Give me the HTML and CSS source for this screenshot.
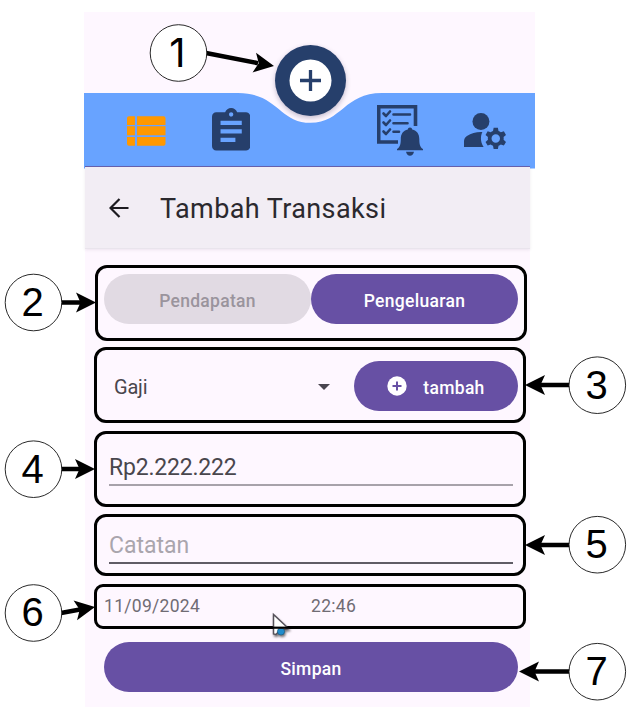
FILE: index.html
```html
<!DOCTYPE html>
<html lang="id">
<head>
<meta charset="utf-8">
<title>Tambah Transaksi</title>
<link rel="stylesheet" href="styles.css">
</head>
<body>
<main class="app">
  <nav class="nav">
    <svg class="nav-shape" viewBox="0 0 451 76" preserveAspectRatio="none"><path d="M0 0H154C194 0 195 30 226.500 30C258 30 260 0 298 0H451V76H0Z"/></svg>
    <div class="nav-items">
      <svg class="ic-list" viewBox="0 0 39 30"><path d="M2 0H8V8.800H0V2Q0 0 2 0ZM10.200 0H37Q39 0 39 2V8.800H10.200ZM0 10.300H8V19.400H0ZM10.200 10.300H39V19.400H10.200ZM0 21H8V30H2Q0 30 0 28ZM10.200 21H39V28Q39 30 37 30H10.200Z"/></svg>
      <svg class="ic-clip" viewBox="3 1 18 20"><path d="M19 3h-4.180C14.400 1.840 13.300 1 12 1s-2.400.84-2.820 2H5c-1.100 0-2 .9-2 2v14c0 1.100.9 2 2 2h14c1.100 0 2-.9 2-2V5c0-1.100-.9-2-2-2zm-7 0c.55 0 1 .45 1 1s-.45 1-1 1-1-.45-1-1 .45-1 1-1zm2 14H7v-2h7v2zm3-4H7v-2h10v2zm0-4H7V7h10v2z"/></svg>
      <svg class="ic-check" viewBox="0 0 46 51">
        <path class="line frame" d="M38.500 21V1.700H1.700V37H21"/>
        <path class="line" d="M6.500 8.500L9 11L13 6.500M6.500 17.500L9 20L13 15.500M6.500 26.500L9 29L13 24.500M16.500 9.500H33M16.500 18.200H30.500M16.500 26.800H22"/>
        <path d="M33 22.500C34.400 22.500 35 23.400 35.200 24.500C40 25.800 42.300 29 42.300 34C42.300 40 43.500 42.500 46 44V45.300H20V44C22.500 42.500 23.800 40 23.800 34C23.800 29 26 25.800 30.800 24.500C31 23.400 31.600 22.500 33 22.500ZM29 46.800H37Q36 50.700 33 50.700Q30 50.700 29 46.800Z"/>
      </svg>
      <svg class="ic-user" viewBox="2 4 19.830 17"><circle cx="10" cy="8" r="4"/><path d="M10.670 13.020c-.22-.01-.44-.02-.67-.02-2.420 0-4.680.67-6.610 1.820-.88.52-1.390 1.500-1.390 2.530V20h9.260c-.79-1.130-1.260-2.510-1.260-4 0-1.070.25-2.070.67-2.980zM20.750 16c0-.22-.03-.42-.06-.63l1.140-1.010-1-1.730-1.450.49c-.32-.27-.68-.48-1.080-.63L18 11h-2l-.3 1.490c-.4.15-.76.36-1.080.63l-1.450-.49-1 1.730 1.140 1.010c-.03.21-.06.41-.06.63s.03.42.06.63l-1.140 1.010 1 1.730 1.450-.49c.32.27.68.48 1.080.63L16 21h2l.3-1.490c.4-.15.76-.36 1.080-.63l1.450.49 1-1.730-1.140-1.010c.03-.21.06-.41.06-.63zM17 18c-1.100 0-2-.9-2-2s.9-2 2-2 2 .9 2 2-.9 2-2 2z"/></svg>
    </div>
    <div class="fab"><svg viewBox="0 0 71 71"><circle class="fab-in" cx="35.500" cy="35.500" r="21"/><path d="M25 35.500H46M35.500 25V46"/></svg></div>
  </nav>
  <header class="bar">
    <svg class="back" viewBox="0 0 20 20"><path d="M19.500 10H1.500M10.500 1L1.500 10L10.500 19"/></svg>
    <h1>Tambah Transaksi</h1>
  </header>
  <form class="form">
    <section class="group types">
      <div class="btn muted"><span>Pendapatan</span></div>
      <div class="btn"><span>Pengeluaran</span></div>
    </section>
    <section class="group category">
      <div class="select"><span>Gaji</span><i class="caret"></i></div>
      <div class="btn add"><svg viewBox="0 0 20 20"><circle cx="10" cy="10" r="9.700"/><path d="M5.500 10H14.500M10 5.500V14.500"/></svg><span>tambah</span></div>
    </section>
    <section class="group amount"><div class="field">Rp2.222.222</div></section>
    <section class="group note"><div class="field hint">Catatan</div></section>
    <section class="group when"><span class="date">11/09/2024</span><span class="time">22:46</span></section>
    <div class="btn save"><span>Simpan</span></div>
  </form>
</main>

<svg class="overlay" viewBox="0 0 638 708">
  <defs><path id="tip" d="M0 0L-20 -10L-15.500 0L-20 10Z"/></defs>
  <g class="stems"><path d="M206 53L258 63.200M61 302.500H82M605 385H540M61 469H80M605 545H540M61 613L80 609.500M605 671.500H534"/></g>
  <use href="#tip" transform="translate(274 66) rotate(10)"/>
  <use href="#tip" transform="translate(96 302.500)"/>
  <use href="#tip" transform="translate(525 385) rotate(180)"/>
  <use href="#tip" transform="translate(95 469)"/>
  <use href="#tip" transform="translate(525 545) rotate(180)"/>
  <use href="#tip" transform="translate(95 607) rotate(-10)"/>
  <use href="#tip" transform="translate(519 671.500) rotate(180)"/>
  <g class="pointer"><path d="M273.500 614.500V634L276 634.500L280 630L288.500 628.500Z"/><circle cx="281" cy="631.500" r="3.600"/></g>
  <path class="over" d="M270 627.700H292"/>
  <g class="rings"><circle cx="178.500" cy="53" r="28.300"/><circle cx="33.500" cy="302.500" r="28.300"/><circle cx="597.300" cy="385.200" r="28.300"/><circle cx="33.500" cy="469.200" r="28.300"/><circle cx="597.300" cy="544.700" r="28.300"/><circle cx="33.500" cy="613" r="28.300"/><circle cx="597.300" cy="671.700" r="28.300"/></g>
</svg>
<b class="num n1">1</b><b class="num n2">2</b><b class="num n3">3</b><b class="num n4">4</b><b class="num n5">5</b><b class="num n6">6</b><b class="num n7">7</b>
</body>
</html>
```
FILE: styles.css
```css
* { box-sizing: border-box; }
body { margin: 0; width: 638px; height: 708px; overflow: hidden; background: #fff; font-family: Roboto, sans-serif; position: relative; }
svg { display: block; flex: none; }
.app { width: 445px; height: 695px; margin: 12px 0 0 85px; background: #fef7ff; }

/* bottom navigation */
.nav { position: relative; height: 156px; width: 451px; margin-left: -1px; padding-top: 81px; background: #fef7ff; }
.nav-shape { width: 451px; height: 75.500px; fill: #68a3ff; }
.nav-items { position: absolute; left: 43px; top: 93px; height: 51px; display: flex; align-items: flex-start; fill: #263f6b; }
.ic-list { width: 38.500px; height: 30px; margin-top: 11px; fill: #ff9800; }
.ic-clip { width: 38.300px; height: 42.500px; margin: 3px 0 0 46px; }
.ic-check { width: 46px; height: 51px; margin-left: 127px; }
.ic-check .line { fill: none; stroke: #263f6b; stroke-width: 2.600; stroke-linecap: round; stroke-linejoin: round; }
.ic-check .frame { stroke-width: 3.600; stroke-linecap: butt; stroke-linejoin: miter; }
.ic-user { width: 42px; height: 36px; margin: 8px 0 0 41px; }
.fab { position: absolute; left: 191px; top: 32.500px; width: 71px; height: 71px; border-radius: 50%; background: #263f6b; box-shadow: 0 2px 5px rgba(60,50,90,.3); }
.fab path { stroke: #263f6b; stroke-width: 3.300; }
.fab-in { fill: #fff; }

/* title bar */
.bar { position: relative; height: 83px; margin-top: -2px; display: flex; align-items: center; padding-left: 24px; background: #f2edf4; border-top: 1px solid #6560ac; border-bottom: 1px solid #e9e4ec; box-shadow: 0 1px 3px rgba(80,60,90,.1); }
.back { width: 20px; height: 20px; fill: none; stroke: #1d1b20; stroke-width: 2.200; }
h1 { margin: 3px 0 0 31px; font-size: 27px; line-height: 32px; font-weight: 400; color: #2b292e; letter-spacing: .4px; white-space: nowrap; }

/* form */
.form { display: flex; flex-direction: column; padding: 15px 4px 0 9px; }
.group { border: 3px solid #000; border-radius: 12px; display: flex; }
.types { height: 76px; margin: 1px -1px 6px 1px; padding: 6px 6px 0 6px; }
.btn { height: 50px; border-radius: 25px; background: #6750a4; color: #fff; display: flex; align-items: center; justify-content: center; font-size: 17.500px; font-weight: 500; letter-spacing: .3px; }
.btn span { padding-top: 3px; }
.types .btn { flex: none; width: 207px; }
.types .muted { background: #e1dae3; color: #9a949d; }
.category { height: 76px; margin-bottom: 8px; padding: 11px 5px 0 17px; }
.select { width: 216px; height: 51px; display: flex; align-items: center; justify-content: space-between; font-size: 20px; color: #49464d; letter-spacing: -.2px; }
.select span { padding-top: 1px; }
.caret { border: 6.500px solid transparent; border-top-color: #49454f; border-bottom: 0; }
.add { width: 164px; margin-left: 24px; }
.add svg { width: 20px; height: 20px; fill: #fff; margin-right: 16px; }
.add path { stroke: #6750a4; stroke-width: 2; }
.amount { height: 76px; margin-bottom: 7px; padding: 20px 10px 0 12px; }
.field { width: 404px; height: 32px; border-bottom: 2px solid #a7a2aa; font-size: 23px; line-height: 27px; color: #49464d; letter-spacing: -.2px; }
.note { height: 62px; margin-bottom: 8px; padding: 15px 10px 0 12px; }
.note .hint { color: #aaa5ad; border-color: #605c66; letter-spacing: 0; }
.when { height: 45px; margin-bottom: 13px; padding: 0 0 1px 7px; align-items: center; border-radius: 9px; font-size: 17.500px; color: #706c74; letter-spacing: .3px; }
.date { width: 207px; }
.save { width: 414px; margin-left: 10px; }

/* callouts */
.overlay { position: absolute; left: 0; top: 0; width: 638px; height: 708px; }
.stems path { stroke: #000; stroke-width: 4.500; fill: none; }
.pointer { filter: drop-shadow(1px 2px 1px rgba(0,0,0,.5)); }
.pointer path { fill: #fff; stroke: #55515a; stroke-width: 1.500; }
.pointer circle { fill: #218ccc; stroke: #145070; stroke-width: .6; }
.over { stroke: #000; stroke-width: 2.200; }
.rings circle { fill: #fff; stroke: #111; stroke-width: .9; }
.num { position: absolute; width: 57px; height: 57px; color: #000; font: 400 40px/57px "Liberation Sans", sans-serif; text-align: center; }
.n1 { left: 149px; top: 24px; font-family: Inter, sans-serif; }
.n2 { left: 4px; top: 274px; }
.n3 { left: 568px; top: 357px; }
.n4 { left: 4px; top: 441px; }
.n5 { left: 568px; top: 516px; }
.n6 { left: 4px; top: 584px; }
.n7 { left: 568px; top: 643px; }
```
